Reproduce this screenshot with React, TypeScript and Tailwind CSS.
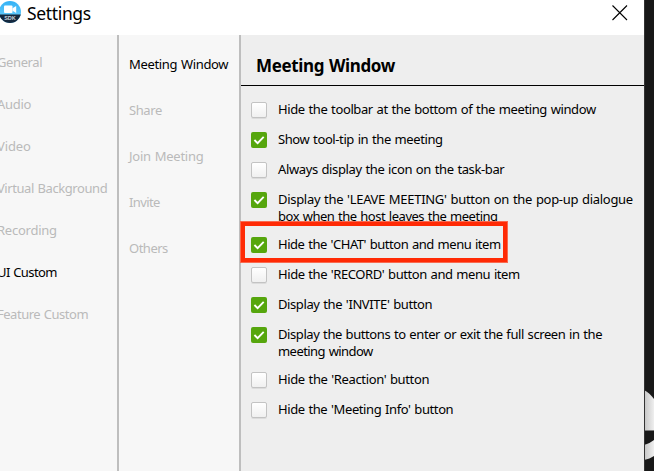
const categories = [
  { label: 'General', tracking: 'tracking-[-0.4px]' },
  { label: 'Audio', tracking: 'tracking-[-0.3px]' },
  { label: 'Video', tracking: 'tracking-[-0.1px]' },
  { label: 'Virtual Background', tracking: 'tracking-[-0.43px]' },
  { label: 'Recording', tracking: 'tracking-[-0.25px]' },
  { label: 'UI Custom', tracking: 'tracking-[-0.6px]', active: true },
  { label: 'Feature Custom', tracking: 'tracking-[-0.48px]' },
];

const sections = [
  { label: 'Meeting Window', tracking: 'tracking-[-0.34px]', active: true },
  { label: 'Share', tracking: 'tracking-[-0.4px]' },
  { label: 'Join Meeting', tracking: 'tracking-[-0.25px]' },
  { label: 'Invite', tracking: 'tracking-[-0.6px]' },
  { label: 'Others', tracking: 'tracking-[-0.5px]' },
];

type Line = [text: string, tracking: string];

const options: { checked: boolean; highlighted?: boolean; lines: Line[] }[] = [
  { checked: false, lines: [['Hide the toolbar at the bottom of the meeting window', 'tracking-[-0.39px]']] },
  { checked: true, lines: [['Show tool-tip in the meeting', 'tracking-[-0.4px]']] },
  { checked: false, lines: [['Always display the icon on the task-bar', 'tracking-[-0.38px]']] },
  {
    checked: true,
    lines: [
      ["Display the 'LEAVE MEETING' button on the pop-up dialogue", 'tracking-[-0.3px]'],
      ['box when the host leaves the meeting', 'tracking-[-0.48px]'],
    ],
  },
  { checked: true, highlighted: true, lines: [["Hide the 'CHAT' button and menu item", 'tracking-[-0.46px]']] },
  { checked: false, lines: [["Hide the 'RECORD' button and menu item", 'tracking-[-0.42px]']] },
  { checked: true, lines: [["Display the 'INVITE' button", 'tracking-[-0.4px]']] },
  {
    checked: true,
    lines: [
      ['Display the buttons to enter or exit the full screen in the', 'tracking-[-0.42px]'],
      ['meeting window', 'tracking-[-0.55px]'],
    ],
  },
  { checked: false, lines: [["Hide the 'Reaction' button", 'tracking-[-0.37px]']] },
  { checked: false, lines: [["Hide the 'Meeting Info' button", 'tracking-[-0.4px]']] },
];

function Logo() {
  return (
    <svg width="22" height="24" viewBox="0 0 22 24" className="shrink-0">
      <defs>
        <linearGradient id="sky" x1="0" y1="0" x2="0" y2="1">
          <stop offset="0" stopColor="#2fb0f5" />
          <stop offset="0.6" stopColor="#5cc6fa" />
        </linearGradient>
        <clipPath id="disc">
          <circle cx="10" cy="12" r="11" />
        </clipPath>
      </defs>
      <g clipPath="url(#disc)">
        <rect x="-1" y="0" width="23" height="24" fill="url(#sky)" />
        <rect x="-1" y="14.5" width="23" height="10" fill="#15293f" />
      </g>
      <rect x="4" y="5.5" width="8.5" height="7.5" rx="1" fill="#fff" />
      <path d="M12.5 8.2 16.2 6v7L12.5 10.8Z" fill="#fff" />
      <text x="10" y="20" textAnchor="middle" fontSize="5.5" fontWeight="700" fill="#c9d2da" fontFamily="Liberation Sans, sans-serif">
        SDK
      </text>
    </svg>
  );
}

function Checkbox({ checked }: { checked: boolean }) {
  if (!checked) {
    return (
      <span className="h-4 w-4 shrink-0 rounded-[2px] border border-[#c3c3c3] bg-gradient-to-b from-white to-[#f0f0f0] shadow-[0_1px_0_#dcdcdc]" />
    );
  }
  return (
    <span className="h-4 w-4 shrink-0 rounded-[2px] bg-[#56a60d]">
      <svg width="16" height="16" viewBox="0 0 16 16" fill="none">
        <path d="M3.4 8 6.6 11.1 12.7 4.8" stroke="#fff" strokeWidth="1.9" />
      </svg>
    </span>
  );
}

export default function App() {
  return (
    <div className="flex h-[471px] w-[654px] overflow-hidden bg-[#181818] font-['Noto_Sans','Open_Sans',sans-serif] text-[13px] leading-[17px] text-black [word-spacing:0.75px]">
      <div className="flex w-[644px] shrink-0 flex-col">
        <header className="flex h-[35px] items-start justify-between bg-white">
          <div className="flex">
            <Logo />
            <h1 className="ml-[5px] text-[17.5px] leading-[26px] tracking-[-0.35px]">Settings</h1>
          </div>
          <svg width="16" height="16" viewBox="0 0 16 16" className="mt-[5px] mr-4" fill="none">
            <path d="M.5.5 15 15M15 .5.5 15" stroke="#000" strokeWidth="1.1" />
          </svg>
        </header>
        <div className="flex min-h-0 flex-1">
          <nav className="flex w-[119px] shrink-0 flex-col border-r-2 border-[#bebebe] bg-[#f7f7f7] pt-[6px]">
            {categories.map((c) => (
              <div key={c.label} className="flex h-[42px] items-center">
                <span className={`-ml-[3px] whitespace-nowrap ${c.tracking} ${c.active ? 'text-black' : 'text-[#bababa]'}`}>{c.label}</span>
              </div>
            ))}
          </nav>
          <nav className="flex w-[122px] shrink-0 flex-col border-r-2 border-[#bebebe] bg-[#f7f7f7] pt-[6px] pl-[10px]">
            {sections.map((s) => (
              <div key={s.label} className="flex h-[46px] items-center">
                <span className={`whitespace-nowrap ${s.tracking} ${s.active ? 'text-black' : 'text-[#bababa]'}`}>{s.label}</span>
              </div>
            ))}
          </nav>
          <main className="min-w-0 flex-1 bg-[#eeeeee]">
            <h2 className="h-[51px] border-b border-black pt-[19px] pl-[15px] text-[17px] leading-6 font-bold tracking-[-0.35px]">
              Meeting Window
            </h2>
            <div className="flex flex-col pt-4 pl-[10px]">
              {options.map((o) => (
                <div key={o.lines[0][0]} className={`relative flex items-start ${o.lines.length > 1 ? 'h-[45px]' : 'h-[30px]'}`}>
                  <Checkbox checked={o.checked} />
                  <div className="-mt-px ml-[11px] flex flex-col items-start">
                    {o.lines.map(([text, tracking]) => (
                      <span key={text} className={`whitespace-nowrap ${tracking}`}>{text}</span>
                    ))}
                  </div>
                  {o.highlighted && (
                    <div className="absolute -top-4 -left-[11px] h-[42px] w-[268px] border-[5px] border-[#ff2a05] outline-1 -outline-offset-1 outline-[#f96a50]" />
                  )}
                </div>
              ))}
            </div>
          </main>
        </div>
      </div>
      <svg width="10" height="471" viewBox="0 0 10 471" className="shrink-0">
        <defs>
          <linearGradient id="sheen" x1="0" y1="0" x2="1" y2="0">
            <stop offset="0" stopColor="#c4c4c4" />
            <stop offset="1" stopColor="#efefef" />
          </linearGradient>
        </defs>
        <path d="M0 390C4 392 7 395 10 399V430H0Z" fill="url(#sheen)" />
        <path d="M0 430.5H10" stroke="#777" />
        <path d="M0 445C4 444 7 442 10 440V456C7 458 4 459 0 460Z" fill="url(#sheen)" />
        <path d="M.5 0V471" stroke="#333" />
      </svg>
    </div>
  );
}
